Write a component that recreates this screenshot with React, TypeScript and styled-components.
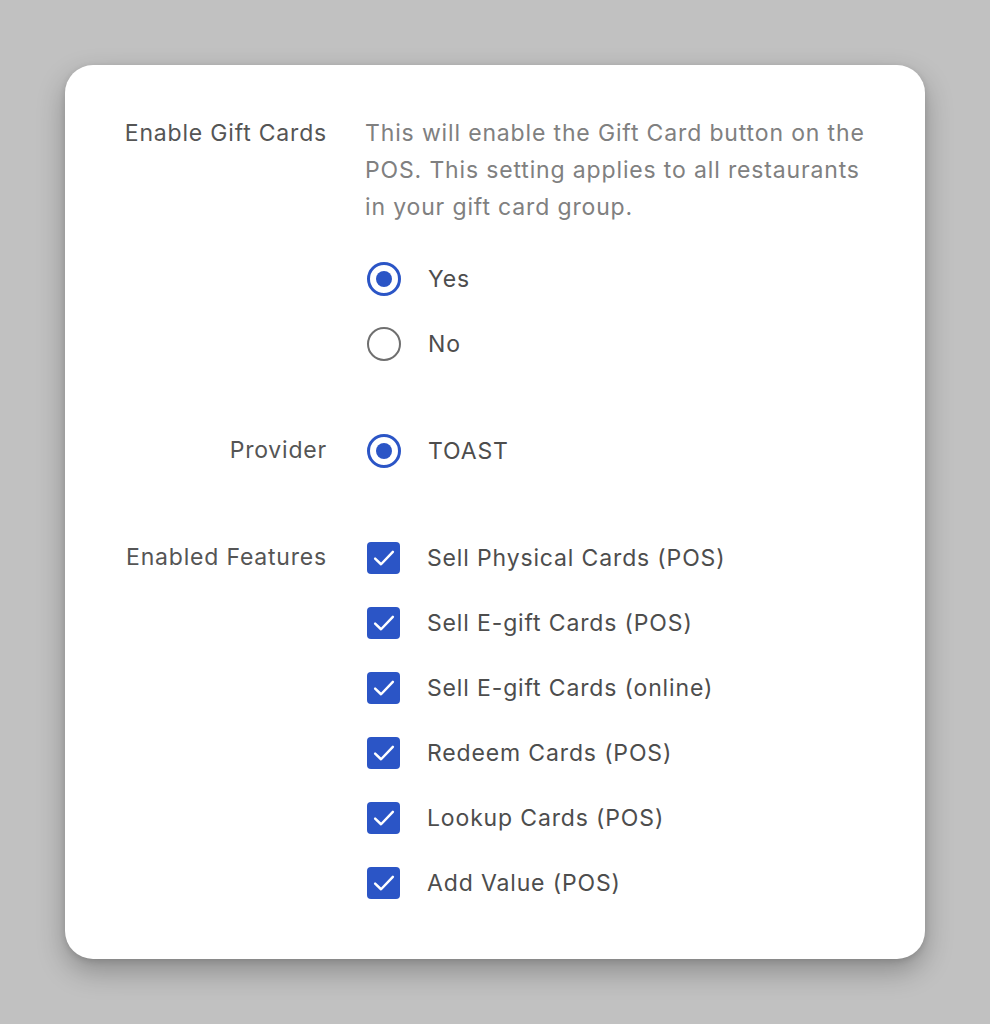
import { createGlobalStyle } from 'styled-components';
import styled from 'styled-components';

const GlobalStyle = createGlobalStyle`
  html, body {
    margin: 0;
    padding: 0;
    background: #c1c1c1;
  }
  body {
    font-family: Inter, Roboto, "Noto Sans", sans-serif;
    -webkit-font-smoothing: antialiased;
  }
`;

const Page = styled.div`
  min-height: 1024px;
  padding: 65px 0 0 65px;
  box-sizing: border-box;
`;

const Card = styled.div`
  width: 860px;
  box-sizing: border-box;
  background: #fff;
  border-radius: 28px;
  box-shadow: 0 12px 28px rgba(0, 0, 0, 0.28), 0 2px 6px rgba(0, 0, 0, 0.12);
  padding: 50px 40px 44px 0;
  display: flex;
  flex-direction: column;
  gap: 42px;
`;

const Section = styled.div`
  display: grid;
  grid-template-columns: 262px 1fr;
  column-gap: 38px;
  align-items: start;
`;

const Label = styled.div<{ $offset?: number }>`
  text-align: right;
  font-size: 23px;
  letter-spacing: 0.8px;
  line-height: 37px;
  color: #555;
  white-space: nowrap;
  padding-top: ${({ $offset }) => $offset ?? 0}px;
`;

const Content = styled.div`
  display: flex;
  flex-direction: column;
`;

const Description = styled.p`
  margin: 0 0 20px;
  font-size: 23px;
  letter-spacing: 0.85px;
  line-height: 37px;
  color: #808080;
  width: 520px;
`;

const OptionRow = styled.label`
  display: flex;
  align-items: center;
  height: 65px;
  gap: 27px;
  font-size: 23px;
  letter-spacing: 0.85px;
  color: #4d4d4d;
  padding-left: 2px;
`;

const RadioDot = styled.span<{ $checked?: boolean }>`
  width: 34px;
  height: 34px;
  box-sizing: border-box;
  border-radius: 50%;
  border: ${({ $checked }) => ($checked ? '3px solid #2b55c6' : '2px solid #6f6f6f')};
  display: flex;
  align-items: center;
  justify-content: center;
  flex-shrink: 0;

  &::after {
    content: '';
    display: ${({ $checked }) => ($checked ? 'block' : 'none')};
    width: 16px;
    height: 16px;
    border-radius: 50%;
    background: #2b55c6;
  }
`;

const CheckBox = styled.span`
  width: 33px;
  height: 32px;
  border-radius: 4px;
  background: #2b55c6;
  display: flex;
  align-items: center;
  justify-content: center;
  flex-shrink: 0;
`;

function Radio({ label, checked }: { label: string; checked?: boolean }) {
  return (
    <OptionRow>
      <RadioDot $checked={checked} />
      {label}
    </OptionRow>
  );
}

function Check({ label }: { label: string }) {
  return (
    <OptionRow>
      <CheckBox>
        <svg width="26" height="26" viewBox="0 0 22 22" fill="none">
          <path d="M3.5 11.5 L8.5 16.3 L18.5 5.8" stroke="#fff" strokeWidth="2.1" strokeLinecap="round" strokeLinejoin="round" />
        </svg>
      </CheckBox>
      {label}
    </OptionRow>
  );
}

const features = [
  'Sell Physical Cards (POS)',
  'Sell E-gift Cards (POS)',
  'Sell E-gift Cards (online)',
  'Redeem Cards (POS)',
  'Lookup Cards (POS)',
  'Add Value (POS)',
];

export default function App() {
  return (
    <>
      <GlobalStyle />
      <Page>
        <Card>
          <Section>
            <Label>Enable Gift Cards</Label>
            <Content>
              <Description>
                This will enable the Gift Card button on the POS. This setting applies to all restaurants
                in your gift card group.
              </Description>
              <Radio label="Yes" checked />
              <Radio label="No" />
            </Content>
          </Section>
          <Section>
            <Label $offset={14}>Provider</Label>
            <Content>
              <Radio label="TOAST" checked />
            </Content>
          </Section>
          <Section>
            <Label $offset={14}>Enabled Features</Label>
            <Content>
              {features.map((f) => (
                <Check key={f} label={f} />
              ))}
            </Content>
          </Section>
        </Card>
      </Page>
    </>
  );
}
